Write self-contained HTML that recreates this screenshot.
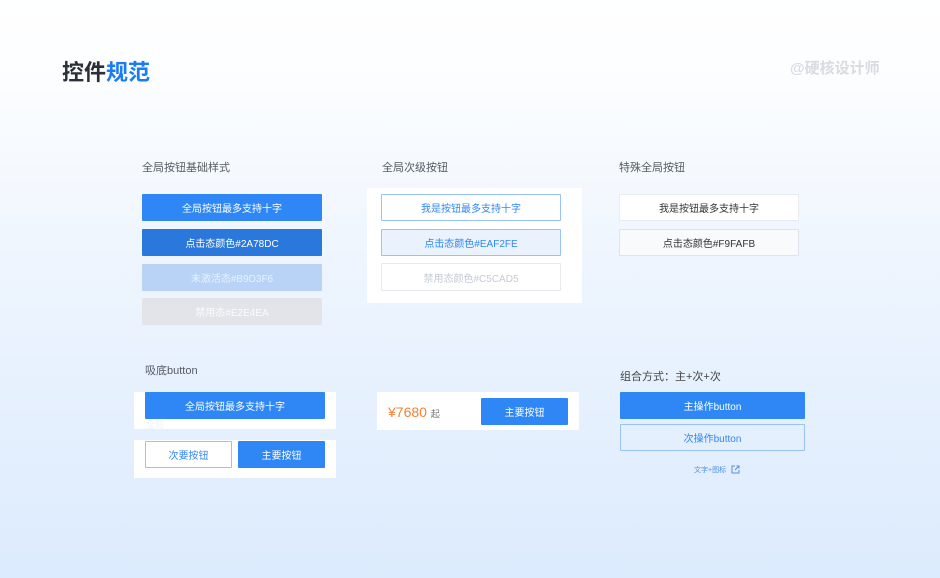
<!DOCTYPE html>
<html><head><meta charset="utf-8"><style>
*{margin:0;padding:0;box-sizing:border-box}
body{width:940px;height:578px;overflow:hidden;position:relative;font-family:"Liberation Sans","Noto Sans CJK SC",sans-serif;background:linear-gradient(180deg,#ffffff 0%,#fbfdff 15%,#eef5fe 45%,#dcebfd 100%)}
.a{position:absolute}
.lbl{font-size:11px;color:#555a63}
.b{position:absolute;display:flex;align-items:center;justify-content:center;font-size:10px;border-radius:1px}
.p{background:#2f87f5;color:#fff}
.s{background:#fff;border:1px solid #98c2f8;color:#2f87f5}
.w{background:#fff}
</style></head><body>
<div class="a" style="left:62px;top:55px;font-size:22px;font-weight:bold;color:#2b2f36;letter-spacing:0px">控件<span style="color:#1a7cf5">规范</span></div>
<div class="a" style="left:790px;top:57px;font-size:15px;font-weight:bold;color:#d7dbe2">@硬核设计师</div>

<div class="a lbl" style="left:142px;top:159px">全局按钮基础样式</div>
<div class="a lbl" style="left:382px;top:159px">全局次级按钮</div>
<div class="a lbl" style="left:619px;top:159px">特殊全局按钮</div>

<div class="b p" style="left:142px;top:194px;width:180px;height:27px">全局按钮最多支持十字</div>
<div class="b" style="left:142px;top:229px;width:180px;height:27px;background:#2a78dc;color:#fff">点击态颜色#2A78DC</div>
<div class="b" style="left:142px;top:264px;width:180px;height:27px;background:#b9d3f6;color:#e8f1fd">未激活态#B9D3F6</div>
<div class="b" style="left:142px;top:298px;width:180px;height:27px;background:#e2e4ea;color:#fbfbfd">禁用态#E2E4EA</div>

<div class="a w" style="left:367px;top:188px;width:215px;height:115px"></div>
<div class="b s" style="left:381px;top:194px;width:180px;height:27px">我是按钮最多支持十字</div>
<div class="b s" style="left:381px;top:229px;width:180px;height:27px;background:#eaf2fe">点击态颜色#EAF2FE</div>
<div class="b" style="left:381px;top:263px;width:180px;height:28px;background:#fff;border:1px solid #e6e9ee;color:#c5cad5">禁用态颜色#C5CAD5</div>

<div class="b" style="left:619px;top:194px;width:180px;height:27px;background:#fff;border:1px solid #e8ebf0;color:#333">我是按钮最多支持十字</div>
<div class="b" style="left:619px;top:229px;width:180px;height:27px;background:#f9fafb;border:1px solid #dfe3ea;color:#333">点击态颜色#F9FAFB</div>

<div class="a lbl" style="left:145px;top:362px">吸底button</div>
<div class="a w" style="left:134px;top:392px;width:202px;height:37px"></div>
<div class="b p" style="left:145px;top:392px;width:180px;height:27px">全局按钮最多支持十字</div>
<div class="a" style="left:146px;top:418px;font-size:9px;color:#eef1f6">全局</div>
<div class="a w" style="left:134px;top:440px;width:202px;height:38px"></div>
<div class="b s" style="left:145px;top:441px;width:87px;height:27px">次要按钮</div>
<div class="b p" style="left:238px;top:441px;width:87px;height:27px">主要按钮</div>

<div class="a w" style="left:377px;top:392px;width:202px;height:38px"></div>
<div class="a" style="left:388px;top:404px;font-size:14px;color:#f5813a">¥7680 <span style="font-size:9px;color:#777">起</span></div>
<div class="b p" style="left:481px;top:398px;width:87px;height:27px">主要按钮</div>

<div class="a" style="left:620px;top:368px;font-size:11px;color:#444">组合方式：主+次+次</div>
<div class="b p" style="left:620px;top:392px;width:185px;height:27px">主操作button</div>
<div class="b s" style="left:620px;top:424px;width:185px;height:27px;background:transparent">次操作button</div>
<div class="a" style="left:694px;top:465px;font-size:7px;color:#4a8ee8">文字+图标</div>
<svg class="a" style="left:731px;top:465px" width="9" height="9" viewBox="0 0 9 9"><path d="M4 1H1V8H8V5M4 5L8 1M5.5 1H8V3.5" fill="none" stroke="#5a8fd8" stroke-width="1"/></svg>
</body></html>
